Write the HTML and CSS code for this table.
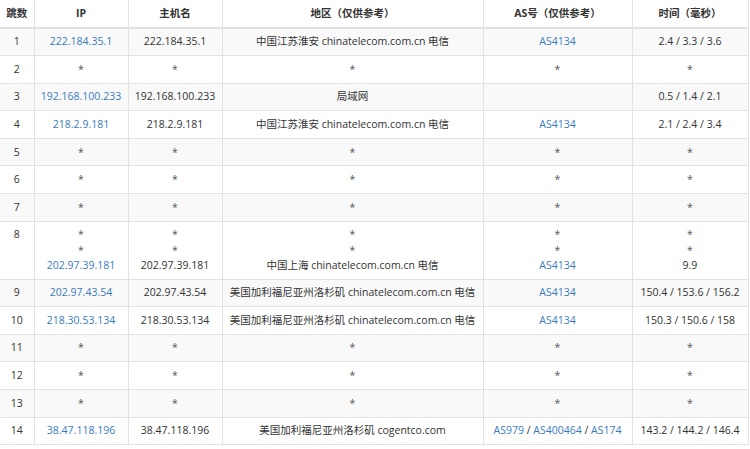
FILE: index.html
```html
<!DOCTYPE html>
<html lang="zh-CN">
<head>
<meta charset="utf-8">
<title>路由追踪</title>
<link rel="stylesheet" href="styles.css">
</head>
<body>
<table class="trace">
  <colgroup>
    <col class="c-hop"><col class="c-ip"><col class="c-host"><col class="c-geo"><col class="c-as"><col class="c-time">
  </colgroup>
  <thead>
    <tr><th>跳数</th><th>IP</th><th>主机名</th><th>地区（仅供参考）</th><th>AS号（仅供参考）</th><th>时间（毫秒）</th></tr>
  </thead>
  <tbody>
    <tr><td>1</td><td><a href="#">222.184.35.1</a></td><td>222.184.35.1</td><td>中国江苏淮安 chinatelecom.com.cn 电信</td><td><a href="#">AS4134</a></td><td>2.4 / 3.3 / 3.6</td></tr>
    <tr><td>2</td><td class="star">*</td><td class="star">*</td><td class="star">*</td><td class="star">*</td><td class="star">*</td></tr>
    <tr><td>3</td><td><a href="#">192.168.100.233</a></td><td>192.168.100.233</td><td>局域网</td><td></td><td>0.5 / 1.4 / 2.1</td></tr>
    <tr><td>4</td><td><a href="#">218.2.9.181</a></td><td>218.2.9.181</td><td>中国江苏淮安 chinatelecom.com.cn 电信</td><td><a href="#">AS4134</a></td><td>2.1 / 2.4 / 3.4</td></tr>
    <tr><td>5</td><td class="star">*</td><td class="star">*</td><td class="star">*</td><td class="star">*</td><td class="star">*</td></tr>
    <tr><td>6</td><td class="star">*</td><td class="star">*</td><td class="star">*</td><td class="star">*</td><td class="star">*</td></tr>
    <tr><td>7</td><td class="star">*</td><td class="star">*</td><td class="star">*</td><td class="star">*</td><td class="star">*</td></tr>
    <tr>
      <td>8</td>
      <td><span class="star">*</span><br><span class="star">*</span><br><a href="#">202.97.39.181</a></td>
      <td><span class="star">*</span><br><span class="star">*</span><br>202.97.39.181</td>
      <td><span class="star">*</span><br><span class="star">*</span><br>中国上海 chinatelecom.com.cn 电信</td>
      <td><span class="star">*</span><br><span class="star">*</span><br><a href="#">AS4134</a></td>
      <td><span class="star">*</span><br><span class="star">*</span><br>9.9</td>
    </tr>
    <tr><td>9</td><td><a href="#">202.97.43.54</a></td><td>202.97.43.54</td><td>美国加利福尼亚州洛杉矶 chinatelecom.com.cn 电信</td><td><a href="#">AS4134</a></td><td>150.4 / 153.6 / 156.2</td></tr>
    <tr><td>10</td><td><a href="#">218.30.53.134</a></td><td>218.30.53.134</td><td>美国加利福尼亚州洛杉矶 chinatelecom.com.cn 电信</td><td><a href="#">AS4134</a></td><td>150.3 / 150.6 / 158</td></tr>
    <tr><td>11</td><td class="star">*</td><td class="star">*</td><td class="star">*</td><td class="star">*</td><td class="star">*</td></tr>
    <tr><td>12</td><td class="star">*</td><td class="star">*</td><td class="star">*</td><td class="star">*</td><td class="star">*</td></tr>
    <tr><td>13</td><td class="star">*</td><td class="star">*</td><td class="star">*</td><td class="star">*</td><td class="star">*</td></tr>
    <tr><td>14</td><td><a href="#">38.47.118.196</a></td><td>38.47.118.196</td><td>美国加利福尼亚州洛杉矶 cogentco.com</td><td><a href="#">AS979</a> / <a href="#">AS400464</a> / <a href="#">AS174</a></td><td>143.2 / 144.2 / 146.4</td></tr>
  </tbody>
</table>
</body>
</html>
```
FILE: styles.css
```css
html, body {
  margin: 0;
  padding: 0;
  background: #fff;
}
body {
  font-family: "Open Sans", "Noto Sans CJK SC", sans-serif;
  font-size: 10.5px;
  color: #333;
}
.trace {
  width: 748px;
  border-collapse: collapse;
  table-layout: fixed;
}
.c-hop { width: 34px; }
.c-ip { width: 94px; }
.c-host { width: 94px; }
.c-geo { width: 261px; }
.c-as { width: 149px; }
.c-time { width: 116px; }
.trace th,
.trace td {
  padding: 5.7px 2px;
  line-height: 15.2px;
  text-align: center;
  vertical-align: top;
  border: 1px solid #e2e2e2;
  white-space: nowrap;
}
.trace th {
  font-weight: bold;
  border-top: none;
  border-bottom: 2px solid #e2e2e2;
}
.trace tr > :first-child { border-left: none; }
.trace tbody tr:first-child td { border-top: none; }
.trace tbody tr:nth-child(odd) { background: #f9f9f9; }
.trace a {
  color: #3a7bbf;
  text-decoration: none;
}
.star { color: #555; }
```
